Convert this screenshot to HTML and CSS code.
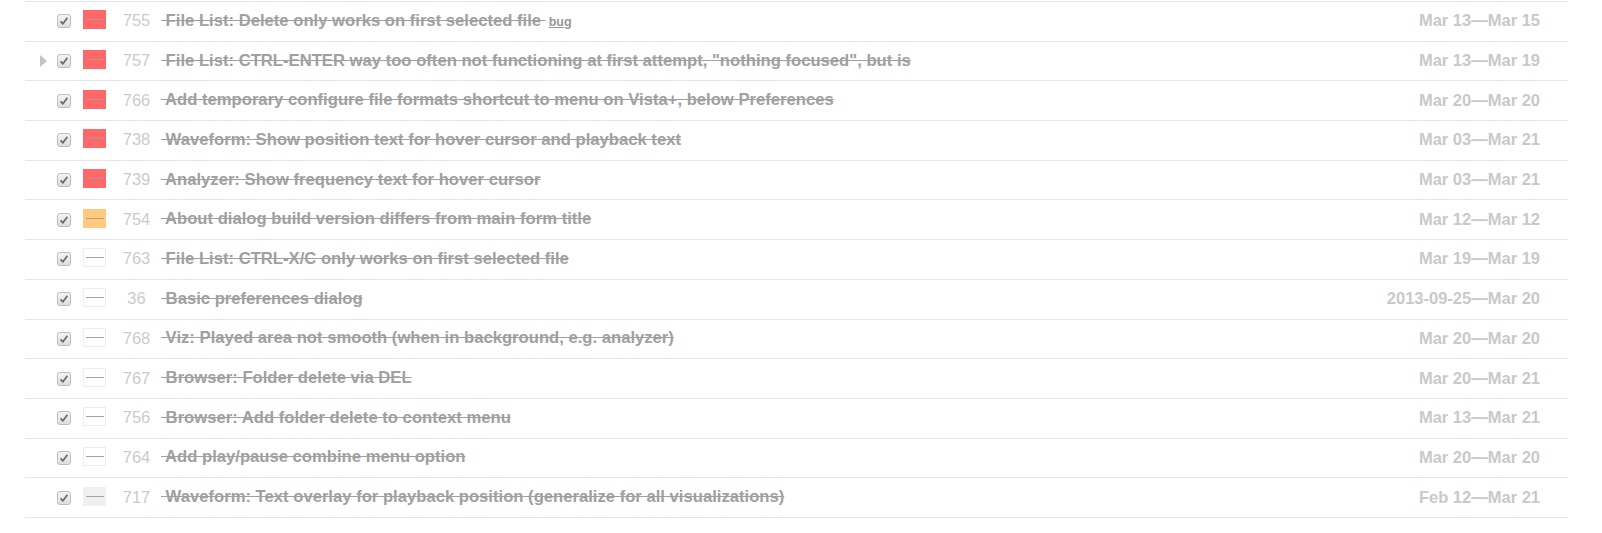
FILE: index.html
```html
<!DOCTYPE html>
<html>
<head>
<meta charset="utf-8">
<link rel="stylesheet" href="styles.css">
</head>
<body>
<svg width="0" height="0" class="defs">
  <defs>
    <linearGradient id="cbg" x1="0" y1="0" x2="0" y2="1">
      <stop offset="0" stop-color="#f6f6f6"/>
      <stop offset="1" stop-color="#dcdcdc"/>
    </linearGradient>
    <symbol id="cb" viewBox="0 0 14 14">
      <rect x="0.5" y="0.5" width="13" height="13" rx="2.5" fill="url(#cbg)" stroke="#bdbdbd"/>
      <path d="M3.6 7.4 L5.9 9.8 L10.4 3.8" fill="none" stroke="#6f6f6f" stroke-width="1.9" stroke-linejoin="round"/>
    </symbol>
  </defs>
</svg>
<div class="list">
  <div class="row"><span class="toggle"></span><svg class="check"><use href="#cb"/></svg><span class="swatch red"><i></i></span><span class="num">755</span><span class="title"><span class="name"> File List: Delete only works on first selected file </span><a class="tag">bug</a></span><span class="date">Mar 13—Mar 15</span></div>
  <div class="row"><span class="toggle on"></span><svg class="check"><use href="#cb"/></svg><span class="swatch red"><i></i></span><span class="num">757</span><span class="title"><span class="name"> File List: CTRL-ENTER way too often not functioning at first attempt, "nothing focused", but is</span></span><span class="date">Mar 13—Mar 19</span></div>
  <div class="row"><span class="toggle"></span><svg class="check"><use href="#cb"/></svg><span class="swatch red"><i></i></span><span class="num">766</span><span class="title"><span class="name"> Add temporary configure file formats shortcut to menu on Vista+, below Preferences</span></span><span class="date">Mar 20—Mar 20</span></div>
  <div class="row"><span class="toggle"></span><svg class="check"><use href="#cb"/></svg><span class="swatch red"><i></i></span><span class="num">738</span><span class="title"><span class="name"> Waveform: Show position text for hover cursor and playback text</span></span><span class="date">Mar 03—Mar 21</span></div>
  <div class="row"><span class="toggle"></span><svg class="check"><use href="#cb"/></svg><span class="swatch red"><i></i></span><span class="num">739</span><span class="title"><span class="name"> Analyzer: Show frequency text for hover cursor</span></span><span class="date">Mar 03—Mar 21</span></div>
  <div class="row"><span class="toggle"></span><svg class="check"><use href="#cb"/></svg><span class="swatch orange"><i></i></span><span class="num">754</span><span class="title"><span class="name"> About dialog build version differs from main form title</span></span><span class="date">Mar 12—Mar 12</span></div>
  <div class="row"><span class="toggle"></span><svg class="check"><use href="#cb"/></svg><span class="swatch white"><i></i></span><span class="num">763</span><span class="title"><span class="name"> File List: CTRL-X/C only works on first selected file</span></span><span class="date">Mar 19—Mar 19</span></div>
  <div class="row"><span class="toggle"></span><svg class="check"><use href="#cb"/></svg><span class="swatch white"><i></i></span><span class="num">36</span><span class="title"><span class="name"> Basic preferences dialog</span></span><span class="date">2013-09-25—Mar 20</span></div>
  <div class="row"><span class="toggle"></span><svg class="check"><use href="#cb"/></svg><span class="swatch white"><i></i></span><span class="num">768</span><span class="title"><span class="name"> Viz: Played area not smooth (when in background, e.g. analyzer)</span></span><span class="date">Mar 20—Mar 20</span></div>
  <div class="row"><span class="toggle"></span><svg class="check"><use href="#cb"/></svg><span class="swatch white"><i></i></span><span class="num">767</span><span class="title"><span class="name"> Browser: Folder delete via DEL</span></span><span class="date">Mar 20—Mar 21</span></div>
  <div class="row"><span class="toggle"></span><svg class="check"><use href="#cb"/></svg><span class="swatch white"><i></i></span><span class="num">756</span><span class="title"><span class="name"> Browser: Add folder delete to context menu</span></span><span class="date">Mar 13—Mar 21</span></div>
  <div class="row"><span class="toggle"></span><svg class="check"><use href="#cb"/></svg><span class="swatch white"><i></i></span><span class="num">764</span><span class="title"><span class="name"> Add play/pause combine menu option</span></span><span class="date">Mar 20—Mar 20</span></div>
  <div class="row"><span class="toggle"></span><svg class="check"><use href="#cb"/></svg><span class="swatch grey"><i></i></span><span class="num">717</span><span class="title"><span class="name"> Waveform: Text overlay for playback position (generalize for all visualizations)</span></span><span class="date">Feb 12—Mar 21</span></div>
</div>
</body>
</html>
```
FILE: styles.css
```css
html, body {
  margin: 0;
  padding: 0;
  background: #fff;
}
body {
  font-family: "Liberation Sans", Arial, Helvetica, sans-serif;
}
.defs {
  position: absolute;
  width: 0;
  height: 0;
}
.list {
  margin: 1px 0 0 25px;
  width: 1543px;
}
.row {
  display: flex;
  align-items: center;
  height: 38.69px;
  border-top: 1px solid #e6e6e6;
  padding-left: 15px;
  padding-right: 28px;
  padding-bottom: 1px;
  box-sizing: content-box;
  white-space: nowrap;
}
.row {
  height: 37.69px;
}
.row:last-child {
  border-bottom: 1px solid #e6e6e6;
}
.toggle {
  width: 7px;
  height: 12px;
  margin-right: 10px;
  flex: none;
  box-sizing: border-box;
}
.toggle.on {
  border-left: 7px solid #c3c3c3;
  border-top: 6px solid transparent;
  border-bottom: 6px solid transparent;
}
.check {
  width: 14px;
  height: 14px;
  margin-right: 12px;
  margin-top: 1px;
  flex: none;
}
.swatch {
  width: 23px;
  height: 19px;
  margin-right: 14px;
  margin-bottom: 2px;
  box-sizing: border-box;
  display: flex;
  align-items: center;
  justify-content: center;
  flex: none;
}
.swatch i {
  display: block;
  width: 18px;
  height: 1px;
  background: #a6a6a6;
}
.swatch.red { background: #ff6868; }
.swatch.red i { background: #b49494; }
.swatch.orange { background: #ffc97e; }
.swatch.orange i { background: #b5a18a; }
.swatch.white { background: #fff; border: 1px solid #ededed; }
.swatch.grey { background: #f0f0f0; }
.num {
  width: 33px;
  margin-right: 8px;
  text-align: center;
  font-size: 16.5px;
  color: #cbcbcb;
  flex: none;
}
.title {
  flex: 1;
  min-width: 0;
  font-size: 16.65px;
}
.name {
  font-weight: bold;
  color: #a0a0a0;
  text-decoration: line-through;
  white-space: pre;
}
.tag {
  display: inline-block;
  font-size: 12.5px;
  font-weight: bold;
  color: #979797;
  text-decoration: underline;
  margin-left: 3px;
}
.date {
  font-size: 16.5px;
  font-weight: bold;
  color: #c9c9c9;
  flex: none;
}
```
